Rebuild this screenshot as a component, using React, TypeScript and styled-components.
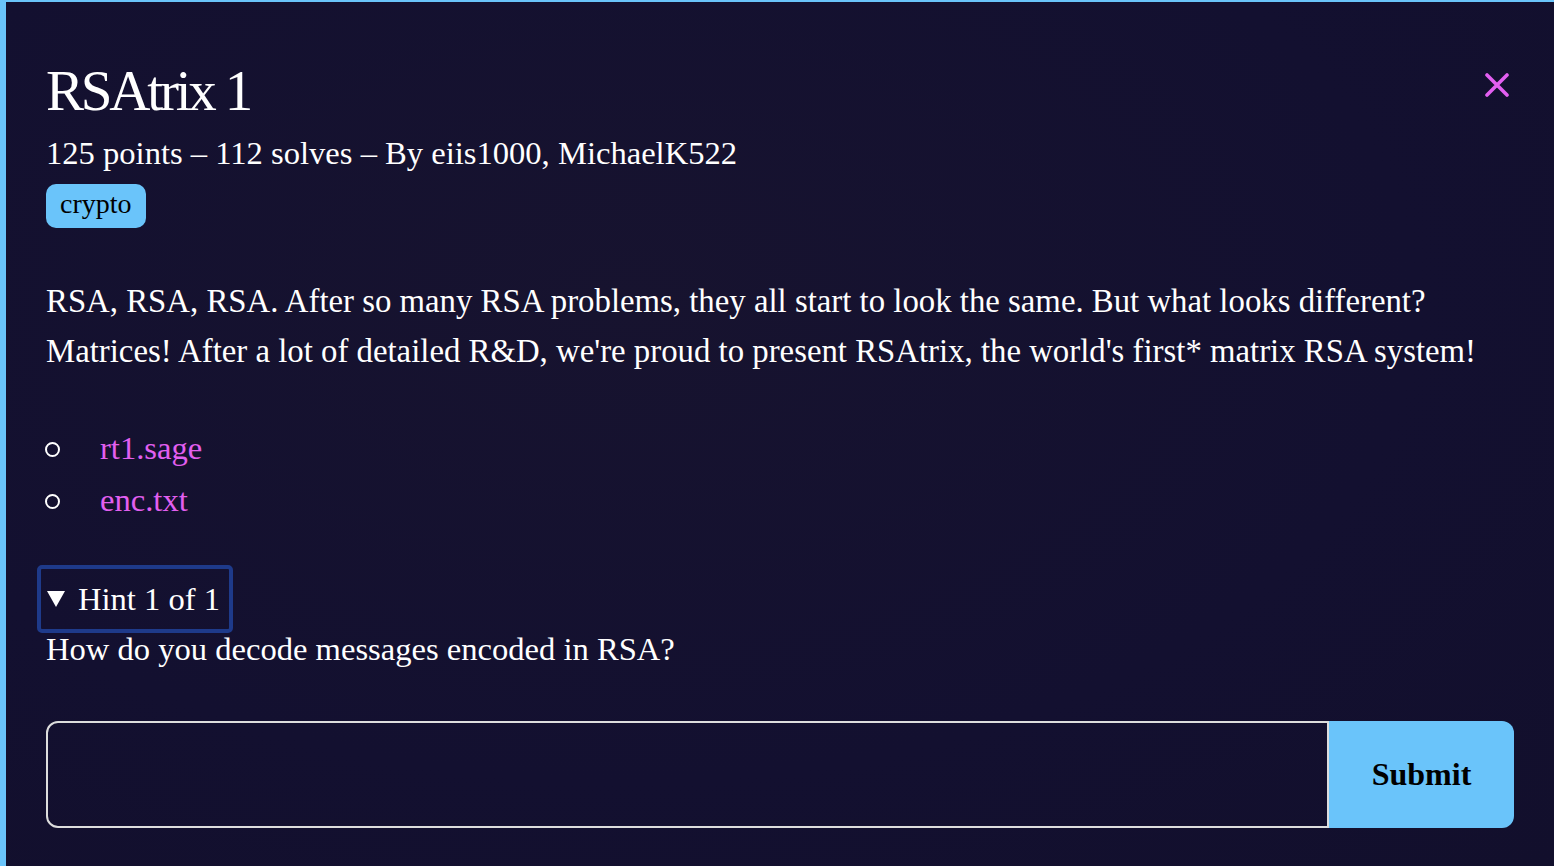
import React from "react";
import styled, { createGlobalStyle } from "styled-components";

const Global = createGlobalStyle`
  html, body { margin: 0; padding: 0; background: #131030; }
  body { font-family: "Liberation Serif", "Times New Roman", serif; color: #fff; }
  * { box-sizing: border-box; }
`;

const Page = styled.div`
  width: 1554px;
  height: 866px;
  overflow: hidden;
  border-left: 6px solid #6ac4fa;
  border-top: 2px solid #6ac4fa;
  background: radial-gradient(ellipse at 40% 35%, #17132f 0%, #131030 60%, #120f2c 100%);
  padding: 57px 40px 0 40px;
  font-size: 32.8px;
  position: relative;
`;

const Close = styled.button`
  position: absolute;
  top: 71px;
  right: 45px;
  width: 24px;
  height: 24px;
  background: none;
  border: none;
  padding: 0;
  cursor: pointer;
  display: flex;
  align-items: center;
  justify-content: center;
`;

const Title = styled.h1`
  margin: 0;
  font-size: 57px;
  font-weight: 400;
  line-height: 64px;
  letter-spacing: -3.2px;
`;

const Meta = styled.div`
  font-size: 32.6px;
  line-height: 40px;
  margin-top: 10px;
`;

const Tags = styled.div`
  display: flex;
  gap: 8px;
  margin-top: 11px;
`;

const Tag = styled.span`
  background: #6ac4fa;
  color: #000;
  font-size: 28px;
  line-height: 40px;
  height: 44px;
  padding: 0 14px 4px;
  border-radius: 10px;
`;

const Desc = styled.p`
  font-size: 32.8px;
  line-height: 50px;
  margin: 48px 0 0 0;
`;

const Files = styled.ul`
  list-style: none;
  margin: 46px 0 0 0;
  padding: 0;
  font-size: 32.6px;
  line-height: 52px;
`;

const FileItem = styled.li`
  display: flex;
  align-items: center;
  gap: 40px;
  &::before {
    content: "";
    flex: none;
    width: 11px;
    height: 11px;
    border: 2px solid #fff;
    border-radius: 50%;
    margin-left: -1px;
    margin-top: 2px;
  }
`;

const FileLink = styled.a`
  color: #e25ff0;
  text-decoration: none;
`;

const Hint = styled.details`
  margin-top: 39px;
  font-size: 32.6px;
`;

const Summary = styled.summary`
  display: inline-flex;
  align-items: center;
  gap: 13px;
  border: 4px solid #1e3a8a;
  border-radius: 5px;
  padding: 10px 9px 10px 6px;
  margin-left: -9px;
  line-height: 40px;
  cursor: pointer;
  list-style: none;
  &::-webkit-details-marker { display: none; }
`;

const HintText = styled.div`
  line-height: 40px;
  margin-top: -4px;
`;

const Form = styled.form`
  display: flex;
  margin-top: 52px;
  height: 107px;
`;

const Input = styled.input`
  flex: 1;
  background: transparent;
  border: 2px solid #ddd;
  border-radius: 12px 0 0 12px;
  color: #fff;
  font-size: 28px;
  font-family: inherit;
  padding: 0 16px;
  outline: none;
`;

const Submit = styled.button`
  width: 185px;
  background: #6ac4fa;
  border: none;
  border-radius: 0 12px 12px 0;
  font-family: "Liberation Serif", "Times New Roman", serif;
  font-weight: 700;
  font-size: 32px;
  color: #000;
  cursor: pointer;
`;

export default function App() {
  return (
    <>
      <Global />
      <Page>
        <Close aria-label="close">
          <svg width="24" height="24" viewBox="0 0 24 24">
            <path d="M2 2 L22 22 M22 2 L2 22" stroke="#e25ff0" strokeWidth="3.6" strokeLinecap="round" />
          </svg>
        </Close>
        <Title>RSAtrix 1</Title>
        <Meta>125 points – 112 solves – By eiis1000, MichaelK522</Meta>
        <Tags>
          <Tag>crypto</Tag>
        </Tags>
        <Desc>
          RSA, RSA, RSA. After so many RSA problems, they all start to look the same. But what looks different?
          <br />
          Matrices! After a lot of detailed R&amp;D, we're proud to present RSAtrix, the world's first* matrix RSA system!
        </Desc>
        <Files>
          <FileItem><FileLink href="#">rt1.sage</FileLink></FileItem>
          <FileItem><FileLink href="#">enc.txt</FileLink></FileItem>
        </Files>
        <Hint open>
          <Summary>
            <svg width="18" height="17" viewBox="0 0 18 17">
              <polygon points="0,0 18,0 9,16" fill="#fff" />
            </svg>
            Hint 1 of 1
          </Summary>
          <HintText>How do you decode messages encoded in RSA?</HintText>
        </Hint>
        <Form onSubmit={(e) => e.preventDefault()}>
          <Input type="text" />
          <Submit type="submit">Submit</Submit>
        </Form>
      </Page>
    </>
  );
}
